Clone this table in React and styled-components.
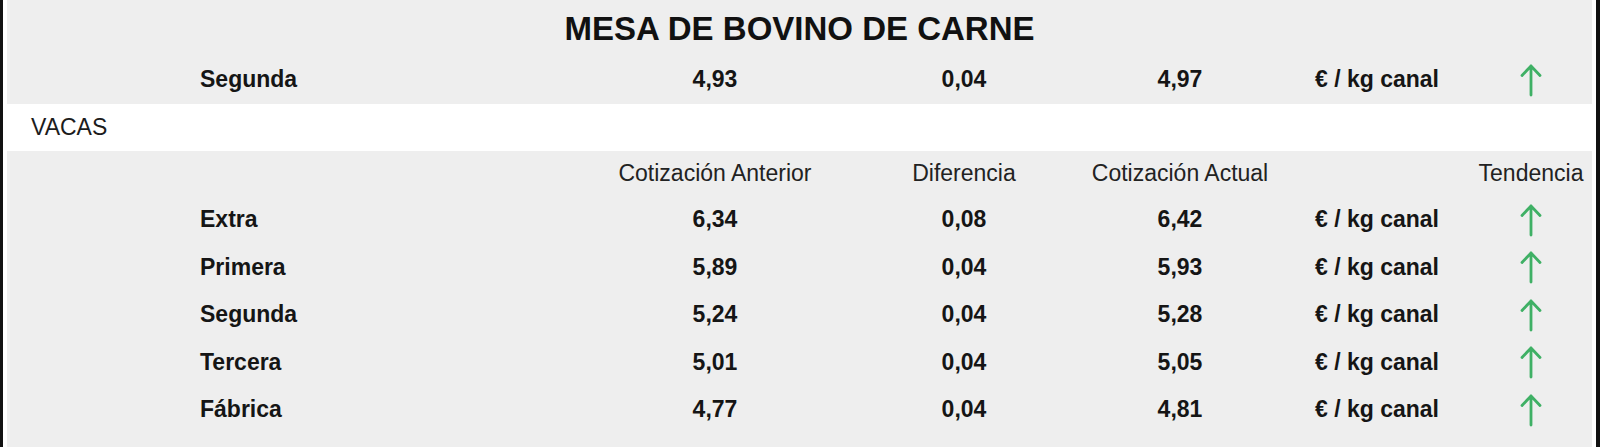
import styled, { createGlobalStyle } from "styled-components"

const GlobalStyle = createGlobalStyle`
  html, body {
    margin: 0;
    padding: 0;
    background: #ffffff;
  }
  body {
    font-family: "Liberation Sans", Arial, sans-serif;
    color: #151515;
  }
`

const Marco = styled.div`
  box-sizing: border-box;
  height: 447px;
  border-left: 3px solid #111;
  border-right: 4px solid #111;
  padding: 0 4px;
  background: #ffffff;
`

const Tablero = styled.div`
  height: 100%;
  background: #eeeeee;
`

const Titulo = styled.h1`
  margin: 0;
  height: 56px;
  line-height: 58px;
  text-align: center;
  font-size: 33px;
  font-weight: 700;
  color: #111;
`

const Fila = styled.div`
  display: grid;
  grid-template-columns: 608px 200px 298px 134px 260px 48px 1fr;
  height: ${(p) => (p.$cabecera ? 45.5 : 47.5)}px;
  align-items: center;
  font-size: 23px;
  font-weight: ${(p) => (p.$cabecera ? 400 : 700)};
  color: ${(p) => (p.$cabecera ? "#222" : "#151515")};
`

const Seccion = styled.div`
  height: 47px;
  line-height: 47px;
  padding-left: 24px;
  background: #ffffff;
  font-size: 23px;
  color: #1c1c1c;
`

const Etiqueta = styled.div`
  padding-left: 193px;
`

const Celda = styled.div`
  display: flex;
  justify-content: center;
  white-space: nowrap;
`

const Flecha = () => (
  <svg width="24" height="34" viewBox="0 0 24 34" fill="none">
    <path
      d="M12 32V3M3 12.5L12 3l9 9.5"
      stroke="#3fb065"
      strokeWidth="2.8"
      strokeLinecap="round"
      strokeLinejoin="round"
    />
  </svg>
)

const UNIDAD = "€ / kg canal"

const vacas = [
  { nombre: "Extra", anterior: "6,34", dif: "0,08", actual: "6,42" },
  { nombre: "Primera", anterior: "5,89", dif: "0,04", actual: "5,93" },
  { nombre: "Segunda", anterior: "5,24", dif: "0,04", actual: "5,28" },
  { nombre: "Tercera", anterior: "5,01", dif: "0,04", actual: "5,05" },
  { nombre: "Fábrica", anterior: "4,77", dif: "0,04", actual: "4,81" },
]

const FilaPrecio = ({ nombre, anterior, dif, actual }) => (
  <Fila>
    <Etiqueta>{nombre}</Etiqueta>
    <Celda>{anterior}</Celda>
    <Celda>{dif}</Celda>
    <Celda>{actual}</Celda>
    <Celda>{UNIDAD}</Celda>
    <Celda><Flecha /></Celda>
  </Fila>
)

const App = () => {
  return (
    <>
      <GlobalStyle />
      <Marco>
        <Tablero>
          <Titulo>MESA DE BOVINO DE CARNE</Titulo>
          <FilaPrecio nombre="Segunda" anterior="4,93" dif="0,04" actual="4,97" />
          <Seccion>VACAS</Seccion>
          <Fila $cabecera>
            <div />
            <Celda>Cotización Anterior</Celda>
            <Celda>Diferencia</Celda>
            <Celda>Cotización Actual</Celda>
            <div />
            <Celda>Tendencia</Celda>
          </Fila>
          {vacas.map((v) => (
            <FilaPrecio key={v.nombre} {...v} />
          ))}
        </Tablero>
      </Marco>
    </>
  )
}

export default App
